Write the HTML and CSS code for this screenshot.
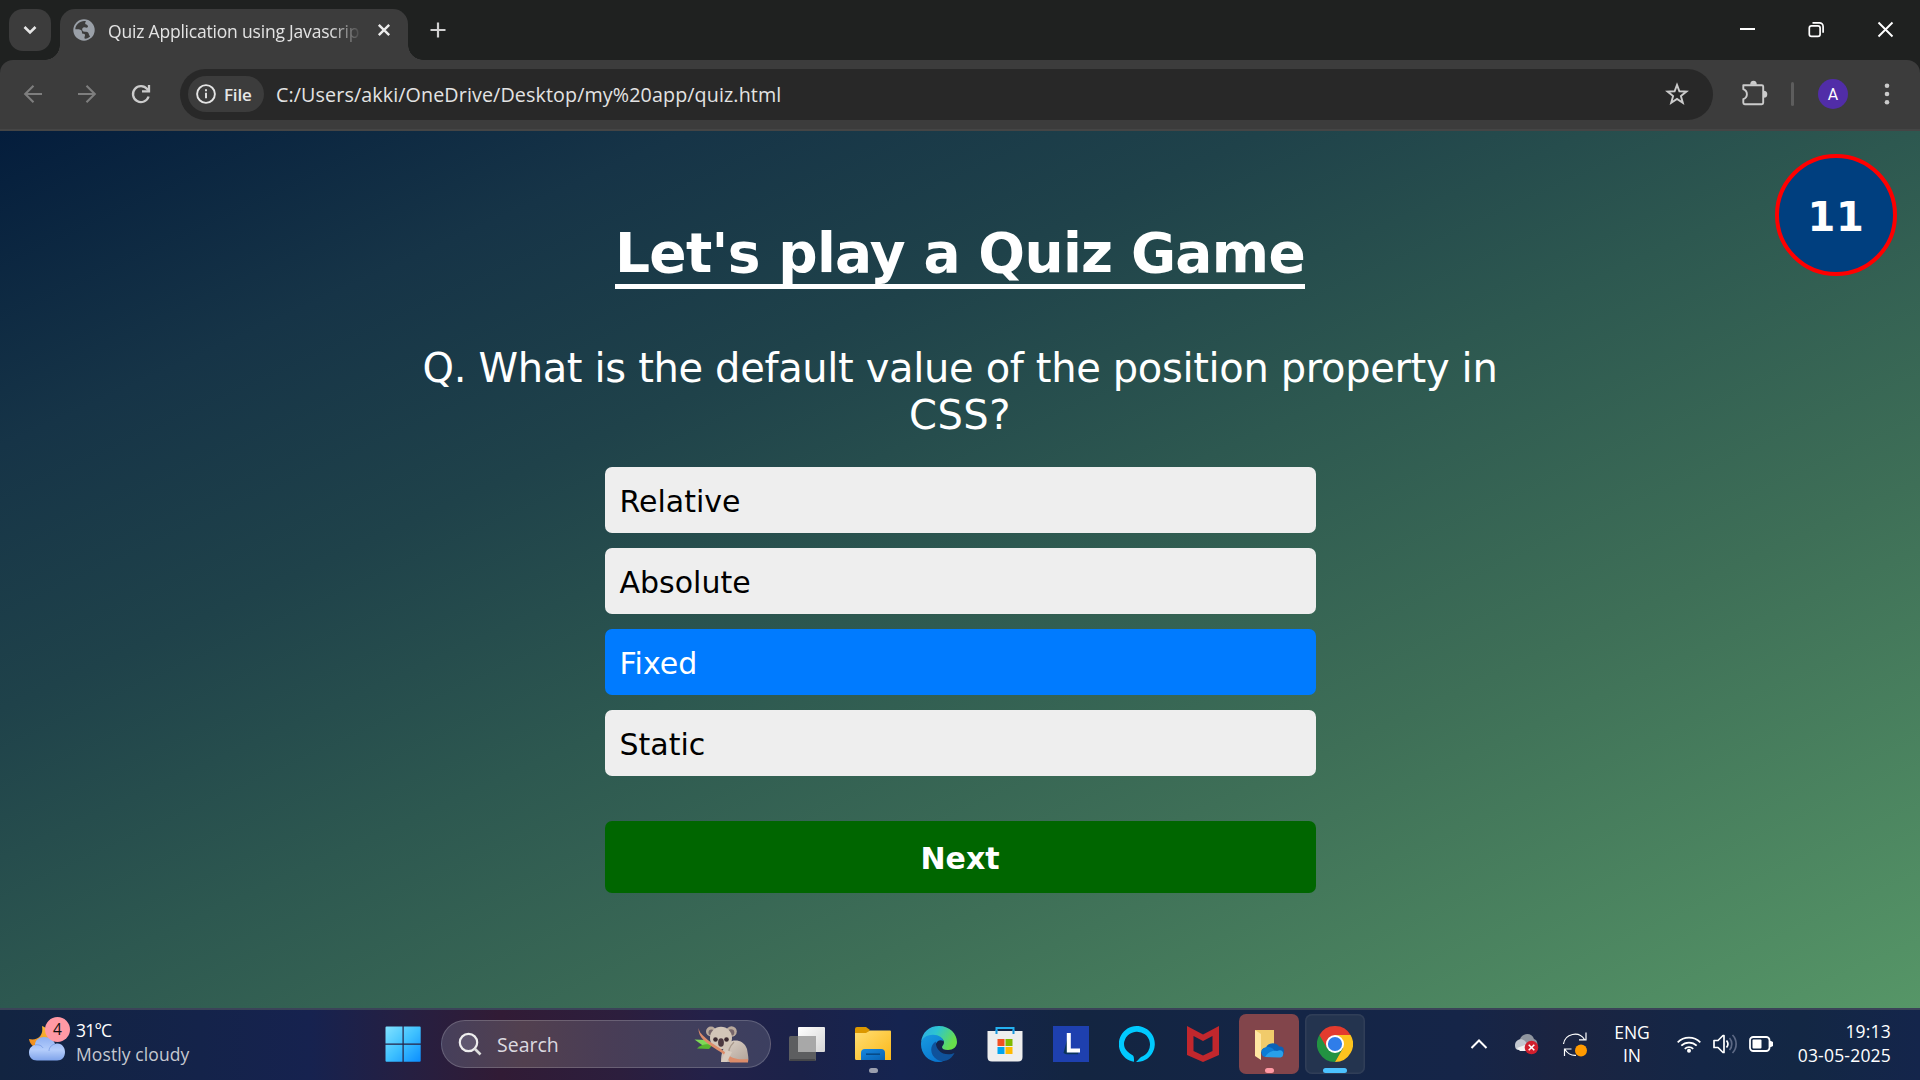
FILE: index.html
```html
<!DOCTYPE html>
<html lang="en">
<head>
<meta charset="utf-8">
<title>Quiz Application using Javascript</title>
<link rel="stylesheet" href="styles.css">
</head>
<body>
<div class="screen">
  <header class="tabstrip">
    <button class="tab-search" aria-label="Search tabs"><svg width="42" height="42" viewBox="0 0 42 42"><path d="M15.500 18l5.500 5.500 5.500-5.500" fill="none" stroke="#e6e6e6" stroke-width="2.600"/></svg></button>
    <div class="tab">
      <svg class="globe" width="22" height="22" viewBox="0 0 22 22"><circle cx="11" cy="11" r="10.700" fill="#9aa0a8"/><path d="M13 2.200C8 1 2.500 5 2.300 10.300c2 .2 5.200-.3 6.200 1.200.8 1.300 0 2.600 1.200 3.200 1.200.5 2-.1 2.300 1 .2 1-.7 1.800-.5 3.900 2.200.3 4.300-.8 5.600-2.100-1.200-.8-1-3.300-2.300-4.200-1.800-1.100-4.600 0-5.400-1.800-.7-1.700.3-3.200 2-3.200 1.300 0 2.300.8 3.300 0 .9-.8-.2-2.300-1.300-2.700-1.300-.4-1.800-1.600-.4-3.400z" fill="#3c3c3c"/></svg>
      <span class="tab-title">Quiz Application using Javascrip</span>
      <svg class="tab-close" width="14" height="14" viewBox="0 0 14 14"><path d="M1.800 1.800l10.400 10.400M12.200 1.800L1.800 12.200" stroke="#ececec" stroke-width="2.400"/></svg>
    </div>
    <svg class="new-tab" width="16" height="16" viewBox="0 0 16 16"><path d="M8 .5v15M.5 8h15" stroke="#d0d0d0" stroke-width="2.200"/></svg>
    <div class="window-controls">
      <svg width="69" height="60" viewBox="0 0 69 60"><path d="M27 29h15" stroke="#fff" stroke-width="2"/></svg>
      <svg width="69" height="60" viewBox="0 0 69 60" fill="none" stroke="#fff" stroke-width="1.700"><rect x="27.300" y="25.800" width="10.800" height="10.600" rx="2.200"/><path d="M30.500 22.800h7a3.600 3.600 0 0 1 3.600 3.600v6.400"/></svg>
      <svg width="69" height="60" viewBox="0 0 69 60"><path d="M27.500 22.500l14 14M41.500 22.500l-14 14" stroke="#fff" stroke-width="1.900"/></svg>
    </div>
  </header>

  <div class="toolbar-back">
  <nav class="toolbar">
    <svg width="54" height="70" viewBox="0 0 54 70" fill="none" stroke="#7e7e7e" stroke-width="2.100"><path d="M36 35H19.500M27.500 26.700L19.200 35l8.300 8.300"/></svg>
    <svg width="54" height="70" viewBox="0 0 54 70" fill="none" stroke="#7e7e7e" stroke-width="2.100"><path d="M18 35h16.500M26.500 26.700l8.300 8.300-8.300 8.300"/></svg>
    <svg width="54" height="70" viewBox="0 0 54 70" fill="none" stroke="#cbcbcb" stroke-width="2.300"><path d="M34.600 37.500a8 8 0 1 1-1.400-7.500l1 1.400"/><path d="M28 32.400h7V26"/></svg>
    <div class="omnibox">
      <div class="chip">
        <svg width="20" height="20" viewBox="0 0 20 20"><circle cx="10" cy="10" r="8.900" fill="none" stroke="#e4e4e4" stroke-width="1.900"/><path d="M10 8.700v5.600M10 5.300v2" stroke="#e4e4e4" stroke-width="1.900"/></svg>
        <span>File</span>
      </div>
      <span class="url">C:/Users/akki/OneDrive/Desktop/my%20app/quiz.html</span>
      <svg class="star" width="24" height="24" viewBox="0 0 24 24"><path d="M12 2.900l2.400 6.400 7 .3-5.500 4.400 1.900 6.800-5.800-3.900-5.800 3.900L8.100 14 2.600 9.600l7-.3z" fill="none" stroke="#cbcbcb" stroke-width="1.900"/></svg>
    </div>
    <svg width="78" height="70" viewBox="0 0 78 70"><path d="M30.300 26.200h18.500q1.400 0 1.400 1.400v16.200q0 1.400-1.400 1.400H31.700q-1.400 0-1.400-1.400v-3.600q3.600-1.500 3.600-5t-3.600-5z" fill="none" stroke="#cbcbcb" stroke-width="1.900" stroke-linejoin="round"/><path d="M37.200 25.800a3.300 4 0 0 1 6.600 0zM50.800 31.700a3.500 3.500 0 0 1 0 7z" fill="#cbcbcb"/></svg>
    <span class="divider"></span>
    <div class="avatar-slot"><span class="avatar">A</span></div>
    <svg width="30" height="70" viewBox="0 0 30 70" fill="#cbcbcb"><circle cx="15" cy="26.700" r="2.300"/><circle cx="15" cy="35" r="2.300"/><circle cx="15" cy="43.300" r="2.300"/></svg>
  </nav>
  </div>

  <main class="quiz">
    <div class="timer">11</div>
    <h1>Let's play a Quiz Game</h1>
    <p class="question">Q. What is the default value of the position property in<br><span class="question-end">CSS?</span></p>
    <ul class="options">
      <li>Relative</li>
      <li>Absolute</li>
      <li class="selected">Fixed</li>
      <li>Static</li>
    </ul>
    <button class="next">Next</button>
  </main>

  <footer class="taskbar">
    <div class="weather">
      <svg width="42" height="46" viewBox="0 0 42 46">
        <defs><linearGradient id="cloud" x1="0" y1="0" x2="0" y2="1"><stop offset="0" stop-color="#8fb0f2"/><stop offset=".55" stop-color="#b4cdfb"/><stop offset="1" stop-color="#7fa3ea"/></linearGradient><linearGradient id="moon" x1="1" y1="0" x2="0" y2="1"><stop offset="0" stop-color="#f9c23c"/><stop offset="1" stop-color="#ef8316"/></linearGradient></defs>
        <path d="M14 9c10 3 14 20 3 23C9 33 2 29 1 22c8 2 15-3 13-13z" fill="url(#moon)"/>
        <path d="M7 28c0-5 4-8 9-8 6 0 10 3 11 7 6-2 10 3 10 8s-3 8.500-8 8.500H9c-5 0-8-3.500-8-8s3-7 6-7.500z" fill="url(#cloud)"/>
        <path d="M7 28c4-1 7 1 8 3M27 27c-4 1-6 4-6 7" fill="none" stroke="#6f93df" stroke-width="1" opacity=".7"/>
      </svg>
      <span class="badge">4</span>
      <div class="weather-text"><span class="temp">31°C</span><span class="sky">Mostly cloudy</span></div>
    </div>

    <div class="apps">
      <div class="app"><svg width="36" height="36" viewBox="0 0 36 36"><defs><linearGradient id="win" gradientUnits="userSpaceOnUse" x1="0" y1="0" x2="36" y2="36"><stop offset="0" stop-color="#84e3ff"/><stop offset=".5" stop-color="#3fc1ff"/><stop offset="1" stop-color="#0a8dff"/></linearGradient></defs><path fill="url(#win)" d="M1.500.5h16v17h-17v-16q0-1 1-1zM18.700.5h16q1 0 1 1v16h-17zM.5 18.700h17v17h-16q-1 0-1-1zM18.700 18.700h17v16q0 1-1 1h-16z"/></svg></div>
      <div class="search">
        <svg width="24" height="24" viewBox="0 0 24 24"><circle cx="10.500" cy="10.500" r="8.700" fill="rgba(180,180,210,.2)" stroke="#eee" stroke-width="2.200"/><path d="M16.500 16.500l6 6" stroke="#ddd" stroke-width="2.600"/></svg>
        <span class="search-label">Search</span>
        <svg class="koala" width="56" height="38" viewBox="0 0 56 38">
          <defs><linearGradient id="fur" x1="0" y1="0" x2="1" y2="1"><stop offset="0" stop-color="#e0d5ca"/><stop offset="1" stop-color="#b0a298"/></linearGradient></defs>
          <path d="M.5 14.500l11 .5 8 5-8 2.500z" fill="#7ed957"/><path d="M3 23.500c5-5 11-5 15-3l-3 3.500z" fill="#56b52f"/>
          <path d="M35 17c6-3 15-2 18 7 1 6 2 10 1 13H27c0-8 2-16 8-20z" fill="url(#fur)"/>
          <path d="M40 17c-5 5-6 10-5 14" fill="none" stroke="#a8998c" stroke-width="1.200"/>
          <circle cx="17" cy="6.500" r="5" fill="#b9a99c"/><circle cx="17.500" cy="7.500" r="3" fill="#77666b"/><circle cx="37.500" cy="6.500" r="5.300" fill="#b9a99c"/><circle cx="37" cy="7.500" r="3.300" fill="#77666b"/>
          <ellipse cx="27" cy="13" rx="11" ry="11.200" fill="#d2c5b8"/>
          <path d="M4.500 3c1 4 2 5 5 8 5 5 10 8 16 12 6 4 9 8 14 10 6 2 10 1 14.500 1v3.500H36c-4-8-9-10-15-14C13 18 4 13 4.500 3z" fill="#dc8c6a"/>
          <path d="M38 27l-5 10h-6l5-12z" fill="#d8cbbf"/>
          <circle cx="21.500" cy="14.500" r="2.300" fill="#3b2930"/><circle cx="32.500" cy="14.500" r="2.300" fill="#3b2930"/><ellipse cx="27" cy="17.500" rx="2.900" ry="4.300" fill="#4c3941"/>
        </svg>
      </div>
      <div class="app"><svg width="36" height="36" viewBox="0 0 36 36"><defs><linearGradient id="tv" x1="0" y1="0" x2="1" y2="1"><stop offset="0" stop-color="#fff"/><stop offset="1" stop-color="#d5d5d5"/></linearGradient></defs><rect x="9" y="1" width="27" height="25" rx="1" fill="url(#tv)"/><rect y="10" width="27" height="25" rx="1.500" fill="#5d5e60"/><path d="M9 10h18v16H9z" fill="#a8a8a8"/><path d="M1 34h25" stroke="#3f4043" stroke-width="1.500"/></svg></div>
      <div class="app"><svg width="36" height="36" viewBox="0 0 36 36"><defs><linearGradient id="fold" x1="0" y1="0" x2="1" y2="1"><stop offset="0" stop-color="#ffde73"/><stop offset="1" stop-color="#fbb819"/></linearGradient><linearGradient id="drawer" x1="0" y1="0" x2="1" y2="1"><stop offset="0" stop-color="#1787e0"/><stop offset="1" stop-color="#0862b2"/></linearGradient></defs><path d="M0 3q0-2 2-2h9l4 3-3 4H0z" fill="#dc9800"/><path d="M0 7h11l4-2.500h20q1 0 1 1V34H1.500Q0 34 0 32.500z" fill="url(#fold)"/><path d="M6 34v-7q0-4 4-4h16q4 0 4 4v7z" fill="url(#drawer)"/><path d="M11 28.200h14" stroke="#064a88" stroke-width="1.600"/></svg><span class="dot"></span></div>
      <div class="app"><svg width="36" height="36" viewBox="0 0 36 36"><defs><linearGradient id="e1" x1="0" y1="0" x2="1" y2=".4"><stop offset="0" stop-color="#2da6e8"/><stop offset=".45" stop-color="#2dc4d2"/><stop offset="1" stop-color="#67de4b"/></linearGradient><linearGradient id="e2" x1="0" y1="0" x2=".7" y2="1"><stop offset="0" stop-color="#189be0"/><stop offset="1" stop-color="#0873ce"/></linearGradient></defs><path d="M0 17C1 6 8 0 18 0c11 0 18 8 18 16 0 5-4 8-9 8-4 0-6-1-6-3 0-1 2-2 2-4.500C23 13 19 10 13 10 6 10 1 13 0 17z" fill="url(#e1)"/><path d="M0 18C0 13 5 8.800 12 8.800c6 0 10 3.500 10.500 6.200C17 12 13 18 15 24c2 6 8 8 13 7-3 3-7 5-10 5C7 36 0 28 0 18z" fill="url(#e2)"/><path d="M15 15.500c-7 4-6 14 1 18 7 4 15-.5 17.500-6.500-5 2.500-12 1.500-15.500-2.500-2.500-2.500-3.500-6-3-9z" fill="#0f529b"/></svg></div>
      <div class="app"><svg width="36" height="36" viewBox="0 0 36 36"><path d="M9.500 8V2h17v6" fill="none" stroke="#24b1f0" stroke-width="2"/><path d="M.5 5h35v26q0 4.500-4.500 4.500H5Q.5 35.500.5 31z" fill="#eeeeee"/><path d="M9.500 8V4M26.500 8V4" stroke="#1696dc" stroke-width="2"/><path d="M10.500 13h7v7h-7z" fill="#f25022"/><path d="M18.500 13h7v7h-7z" fill="#7fba00"/><path d="M10.500 21h7v7h-7z" fill="#00a4ef"/><path d="M18.500 21h7v7h-7z" fill="#ffb900"/></svg></div>
      <div class="app"><svg width="36" height="36" viewBox="0 0 36 36"><path d="M0 0h36v36H0z" fill="#1e40af"/><path d="M14 14l-3.500 13 2.500 1.200h12l.5-2H14z" fill="#0b3558"/><path d="M13.800 7h4v15.500H27v4H13.800z" fill="#fff"/></svg></div>
      <div class="app"><svg width="36" height="36" viewBox="0 0 36 36"><path d="M15 35.800A18 18 0 1 1 17 36c2-1.400 3-3.500 5-5A13 13 0 1 0 5 18c0 6 5 9 9 11.500 1 1 1 3 1 6.300z" fill="#00caff"/></svg></div>
      <div class="app"><svg width="36" height="36" viewBox="0 0 36 36"><path d="M2 0l16 8.500L34 0v29l-16 7-16-7zM8.500 10v15l9.500 4.500 9.500-4.500V10L18 15z" fill="#c1272d" fill-rule="evenodd"/></svg></div>
      <div class="app alert"><svg width="36" height="36" viewBox="0 0 36 36"><path d="M4 4h19v22H10z" fill="#f1cb6b"/><path d="M4 4l6 4v26l-6-4z" fill="#ffe6a2"/><path d="M14 30c-5-1-5-8 1-8.500 2-5 10-6 13-1 5-.5 6 3 4 9z" fill="#0a62b8"/><path d="M11 24c3-4 9-4 12 0l3 7H15c-4 0-5.500-4-4-7z" fill="#0c7cd5"/><path d="M14 31c3-5 9-7 12-6 4-2 7 0 6 4 0 2-2 2.500-4 2.500z" fill="#28a0ea"/></svg><span class="dot"></span></div>
      <div class="app active"><svg width="36" height="36" viewBox="0 0 36 36"><path d="M2.410 9A18 18 0 0 0 18 36l7.800-13.500L18 18z" fill="#229342"/><path d="M18 9h15.590A18 18 0 0 1 18 36l7.800-13.500z" fill="#fcc31e"/><path d="M2.410 9A18 18 0 0 1 33.590 9H18l-7.800 13.500z" fill="#e33b2e"/><circle cx="18" cy="18" r="9" fill="#fff"/><circle cx="18" cy="18" r="7.100" fill="#2f7de9"/></svg><span class="dot"></span></div>
    </div>

    <div class="tray">
      <svg width="18" height="12" viewBox="0 0 18 12"><path d="M1.500 10L9 2.500l7.500 7.500" fill="none" stroke="#fff" stroke-width="2"/></svg>
      <svg class="t-cloud" width="26" height="22" viewBox="0 0 26 22"><path d="M6 6c2-6 12-7 14 0 3 1 4 4 3 7H8z" fill="#8f959f"/><path d="M1 12c0-5 6-8 10-4l5 6-4 3H5c-3 0-4-2-4-5z" fill="#c3c8d0"/><path d="M3 15l8-3 4 4-3 2H6z" fill="#f2f2f2"/><circle cx="17.500" cy="14.500" r="6.800" fill="#d11f2d"/><path d="M14.700 11.700l5.600 5.600M20.300 11.700l-5.600 5.600" stroke="#fff" stroke-width="1.600"/></svg>
      <svg class="t-sync" width="26" height="26" viewBox="0 0 26 26"><g fill="none" stroke="#fff" stroke-width="1.200"><path d="M1.500 13A11.500 11.500 0 0 1 22.500 8.500M24 1.500v7.300h-7M14 24.300A12 12 0 0 1 3 18.500M2.500 25v-7h7"/></g><circle cx="19" cy="19.500" r="6" fill="#ff9a00"/></svg>
      <div class="lang"><span>ENG</span><span>IN</span></div>
      <svg class="t-wifi" width="24" height="18" viewBox="0 0 24 18"><g fill="none" stroke="#fff" stroke-width="1.800"><path d="M.7 7.300a16 16 0 0 1 22.600 0M4.300 10.700a11 11 0 0 1 15.400 0M7.800 13.800a6 6 0 0 1 8.400 0"/></g><circle cx="12" cy="15.700" r="2" fill="#fff"/></svg>
      <svg class="t-vol" width="24" height="20" viewBox="0 0 24 20" fill="none" stroke="#fff" stroke-width="1.700"><path d="M1 6.500h4l5-5h1v17h-1l-5-5H1z" stroke-linejoin="round"/><path d="M13.500 6.500a5.500 5.500 0 0 1 0 7"/><path d="M16.500 4a9 9 0 0 1 0 12M19.500 1a13 13 0 0 1 0 18" stroke="#5d6985"/></svg>
      <svg class="t-bat" width="24" height="16" viewBox="0 0 24 16"><rect x="1" y="1" width="19.500" height="14" rx="3.300" fill="none" stroke="#fff" stroke-width="1.800"/><rect x="3.500" y="3.500" width="9" height="9" rx="1" fill="#fff"/><path d="M21 5h1l2 1v4l-2 1h-1z" fill="#fff"/></svg>
      <div class="clock"><span>19:13</span><span>03-05-2025</span></div>
    </div>
  </footer>
</div>
</body>
</html>
```
FILE: styles.css
```css
* { box-sizing: border-box; }
body { margin: 0; overflow: hidden; background: #1f2120; font-family: "Open Sans", "Noto Sans", sans-serif; }
svg { display: block; flex: none; }
button { border: 0; padding: 0; font: inherit; color: inherit; }
.screen { width: 1920px; height: 1080px; display: flex; flex-direction: column; }

.tabstrip { height: 60px; padding: 9px 0 0 9px; display: flex; align-items: flex-start; background: #1f2120; }
.tab-search { width: 42px; height: 42px; border-radius: 14px; background: #3c3c3c; }
.tab { position: relative; width: 348px; height: 51px; margin-left: 9px; padding: 0 17px 9px 13px; display: flex; align-items: center; border-radius: 15px 15px 0 0; background: #3c3c3c; }
.tab::before, .tab::after { content: ""; position: absolute; bottom: 0; width: 15px; height: 15px; }
.tab::before { left: -15px; background: radial-gradient(circle at 0 0, transparent 14.5px, #3c3c3c 15px); }
.tab::after { right: -15px; background: radial-gradient(circle at 100% 0, transparent 14.5px, #3c3c3c 15px); }
.tab-title { width: 252px; margin-left: 13px; padding-top: 2px; overflow: hidden; white-space: nowrap; font-size: 17.500px; letter-spacing: -.2px; color: #e3e3e3; -webkit-mask-image: linear-gradient(90deg, #000 222px, transparent 254px); mask-image: linear-gradient(90deg, #000 222px, transparent 254px); }
.tab-close { margin-left: auto; }
.new-tab { margin: 13px 0 0 22px; }
.window-controls { display: flex; margin: -9px 0 0 auto; }

.toolbar-back { background: #1f2120; }
.toolbar { height: 71px; padding: 0 18px 1px 6px; display: flex; align-items: center; border-radius: 13px 13px 0 0; border-bottom: 2px solid #454545; background: #3c3c3c; }
.omnibox { flex: 1; height: 51px; margin-left: 12px; padding: 0 24px 0 8px; display: flex; align-items: center; border-radius: 26px; background: #282828; }
.chip { width: 76px; height: 36px; padding-left: 8px; display: flex; align-items: center; gap: 8px; border-radius: 18px; background: #3c3c3c; color: #e6e6e6; font-size: 17px; font-weight: 600; letter-spacing: -.2px; }
.url { margin-left: 12px; font-size: 19.700px; letter-spacing: .11px; color: #e3e3e3; white-space: nowrap; }
.star { margin-left: auto; }
.divider { width: 3px; height: 24px; border-radius: 2px; background: #5d5d5d; }
.avatar-slot { width: 78px; display: flex; justify-content: center; }
.avatar { width: 30px; height: 30px; border-radius: 50%; background: #512da8; color: #fff; font: 16px/32px Roboto, sans-serif; text-align: center; }

.quiz { position: relative; height: 877px; padding-top: 89px; display: flex; flex-direction: column; align-items: center; background: linear-gradient(to bottom right, #041d3c, #163447 18%, #1f424a 33%, #2d5850 50%, #3e6f57 70%, #569667); color: #fff; font-family: "DejaVu Sans", Verdana, sans-serif; }
.timer { position: absolute; top: 23px; right: 23px; width: 122px; height: 122px; border: 4px solid #f00; border-radius: 50%; background: #003f7f; font-size: 40px; font-weight: 700; line-height: 119px; letter-spacing: .6px; text-align: center; }
h1 { margin: 0; height: 69px; border-bottom: 5px solid #fff; font-size: 55px; line-height: 66px; letter-spacing: -.68px; white-space: nowrap; }
.question { margin: 56px 0 0; font-size: 40px; line-height: 47px; letter-spacing: -.350px; text-align: center; white-space: nowrap; }
.question-end { letter-spacing: .5px; }
.options { width: 711px; margin: 28px 0 0; padding: 0; list-style: none; display: grid; gap: 15px; }
.options li { height: 66px; padding: 0 15px; border-radius: 7px; background: #eee; color: #000; font-size: 30px; line-height: 70px; }
.options .selected { background: #007bff; color: #fff; }
.next { width: 711px; height: 72px; margin-top: 45px; border-radius: 7px; background: #060; color: #fff; font-size: 30px; font-weight: 700; line-height: 76px; }

.taskbar { height: 72px; padding-bottom: 2px; display: flex; align-items: center; border-top: 2px solid #3b4358; background: linear-gradient(90deg, #122441 0, #14234a 200px, #16224f 310px, #261f41 410px, #311b35 500px, #2c1e3d 620px, #232149 710px, #1b2249 800px, #152450 900px, #132541 1080px, #142546 1300px, #152548 1460px, #1b2441 1560px, #142646 1700px, #132744 1800px, #14254b 1920px); color: #fff; font-size: 17.500px; }
.weather { position: relative; width: 345px; height: 70px; padding: 8px 0 0 28px; display: flex; }
.badge { position: absolute; left: 45px; top: 8px; width: 25px; height: 25px; border-radius: 50%; background: #ff99a4; color: #111; font-size: 15.500px; line-height: 25px; text-align: center; }
.weather-text { margin: 1px 0 0 6px; display: flex; flex-direction: column; line-height: 24px; letter-spacing: .1px; white-space: nowrap; }
.temp { letter-spacing: -.8px; }
.sky { color: #c5c8d0; }
.apps { display: flex; align-items: center; gap: 6px; margin-left: 28px; }
.app { position: relative; width: 60px; height: 60px; display: flex; align-items: center; justify-content: center; border-radius: 7px; }
.app .dot { position: absolute; bottom: 1px; left: 26px; width: 9px; height: 5px; border-radius: 3px; background: #9b9fae; }
.app.alert { background: #82454b; }
.app.alert .dot { background: #ff99a4; }
.app.active { background: #24344f; box-shadow: inset 0 0 0 1.500px #303e58; }
.app.active .dot { left: 18px; width: 24px; background: #4cc2ff; }
.search { width: 330px; height: 48px; margin-left: 2px; padding: 0 20px 0 16px; display: flex; align-items: center; border: 1.500px solid rgba(255, 255, 255, .18); border-radius: 24px; background: linear-gradient(90deg, #463f5b, #52404f 25%, #493d56 50%, #413f5c 75%, #3c3f60); }
.search-label { margin-left: 15px; font-size: 19.500px; color: #dcdae0; }
.koala { margin-left: auto; }
.tray { margin-left: auto; padding-right: 29px; display: flex; align-items: center; line-height: 23px; }
.t-cloud { margin-left: 26px; }
.t-sync { margin-left: 22px; }
.lang { width: 36px; margin-left: 26px; display: flex; flex-direction: column; align-items: center; }
.t-wifi { margin-left: 27px; }
.t-vol, .t-bat { margin-left: 12px; }
.clock { width: 94px; margin: -2px 0 0 24px; display: flex; flex-direction: column; align-items: flex-end; line-height: 24px; letter-spacing: .2px; white-space: nowrap; }
```
